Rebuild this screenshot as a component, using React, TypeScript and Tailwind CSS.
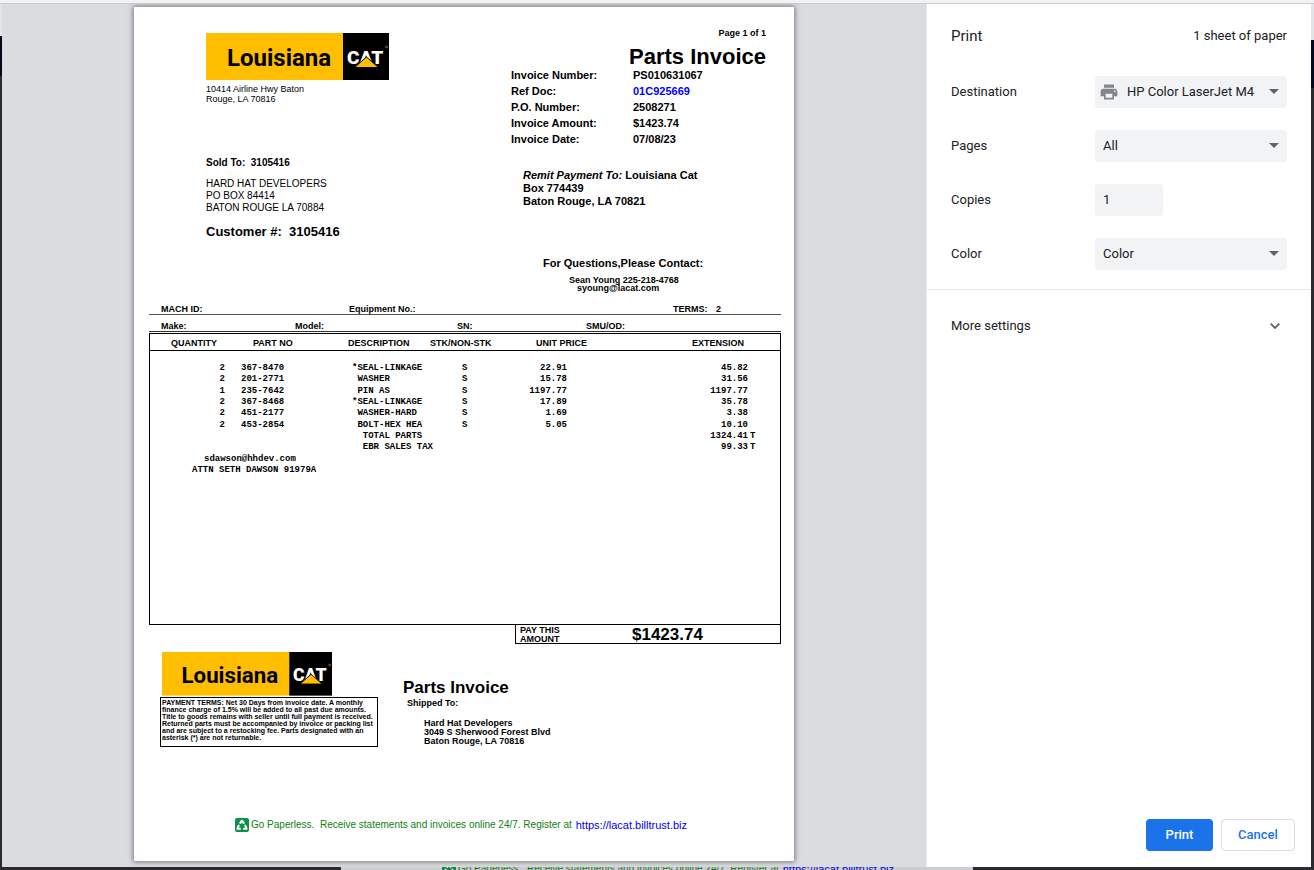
import type { ReactNode } from "react";

const INVOICE_FIELDS = [
  { label: "Invoice Number:", value: "PS010631067" },
  { label: "Ref Doc:", value: "01C925669", link: true },
  { label: "P.O. Number:", value: "2508271" },
  { label: "Invoice Amount:", value: "$1423.74" },
  { label: "Invoice Date:", value: "07/08/23" },
];

const LINES = [
  { qty: "2", part: "367-8470", desc: "*SEAL-LINKAGE", stk: "S", price: "22.91", ext: "45.82" },
  { qty: "2", part: "201-2771", desc: " WASHER", stk: "S", price: "15.78", ext: "31.56" },
  { qty: "1", part: "235-7642", desc: " PIN AS", stk: "S", price: "1197.77", ext: "1197.77" },
  { qty: "2", part: "367-8468", desc: "*SEAL-LINKAGE", stk: "S", price: "17.89", ext: "35.78" },
  { qty: "2", part: "451-2177", desc: " WASHER-HARD", stk: "S", price: "1.69", ext: "3.38" },
  { qty: "2", part: "453-2854", desc: " BOLT-HEX HEA", stk: "S", price: "5.05", ext: "10.10" },
  { desc: "  TOTAL PARTS", ext: "1324.41", tax: "T" },
  { desc: "  EBR SALES TAX", ext: "99.33", tax: "T" },
];

const ROW = "h-[11px] [&:nth-child(3n+2)]:h-3";

function Logo({ className }: { className: string }) {
  return (
    <svg viewBox="0 0 183 47" className={className} role="img" aria-label="Louisiana CAT">
      <rect width="137" height="47" fill="#ffbe00" />
      <rect x="137" width="46" height="47" fill="#000" />
      <g fontFamily="Roboto, 'Liberation Sans', sans-serif" fontWeight="700">
        <text x="21" y="33" fontSize="24">
          Louisiana
        </text>
        <text x="141" y="31" fontSize="19" fontWeight="900" fill="#fff">
          CAT
        </text>
      </g>
      <circle cx="180.500" cy="14" r="1" fill="none" stroke="#bbb" strokeWidth=".5" />
      <path d="M160.500 24 172.500 34.500H148.500z" fill="#ffbe00" stroke="#000" strokeWidth="1" />
    </svg>
  );
}

function RecycleIcon() {
  return (
    <svg viewBox="0 0 14 14" className="size-3.5 shrink-0" aria-hidden="true">
      <rect width="14" height="14" rx="2" fill="#0c9247" />
      <path
        d="M4.800 5.600 7 2.700 9.200 5.600M10 6.800 11.600 10.700H8.200M5.800 10.700H2.400L4 6.800"
        fill="none"
        stroke="#fff"
        strokeWidth="2"
        strokeLinejoin="round"
      />
    </svg>
  );
}

function PrinterIcon() {
  return (
    <svg viewBox="0 0 24 24" className="size-5" fill="#80868b" aria-hidden="true">
      <path d="M19 8H5c-1.660 0-3 1.340-3 3v6h4v4h12v-4h4v-6c0-1.660-1.340-3-3-3zm-3 11H8v-5h8v5zm3-7c-.55 0-1-.45-1-1s.45-1 1-1 1 .45 1 1-.45 1-1 1zm-1-9H6v4h12V3z" />
    </svg>
  );
}

function Paperless() {
  return (
    <div className="flex items-center">
      <RecycleIcon />
      <span className="ml-0.5 whitespace-pre text-[10px] leading-3 text-[#108010]">
        {"Go Paperless.  Receive statements and invoices online 24/7. Register at"}
      </span>
      <a href="#billtrust" className="ml-1 text-[11px] leading-3 text-[#0000ff]">
        https://lacat.billtrust.biz
      </a>
    </div>
  );
}

function LineTable() {
  return (
    <table className="w-full table-fixed border-collapse whitespace-pre text-[9px]">
      <colgroup>
        <col className="w-[75px]" />
        <col className="w-[123px]" />
        <col className="w-[82px]" />
        <col className="w-[70px]" />
        <col className="w-[87px]" />
        <col className="w-[161px]" />
        <col />
      </colgroup>
      <thead>
        <tr className="border-b border-black text-left leading-[14px]">
          <th className="pt-0.5 pr-2 text-right">QUANTITY</th>
          <th className="pt-0.5 pl-7">PART NO</th>
          <th className="pt-0.5">DESCRIPTION</th>
          <th className="pt-0.5">STK/NON-STK</th>
          <th className="pt-0.5 text-right">UNIT PRICE</th>
          <th className="pt-0.5 pr-1 text-right">EXTENSION</th>
          <th />
        </tr>
        <tr className="h-3" />
      </thead>
      <tbody className="font-['Liberation_Mono',monospace] leading-[11px] font-bold">
        {LINES.map((line) => (
          <tr key={`${line.part}${line.desc}`} className={ROW}>
            <td className="text-right">{line.qty}</td>
            <td className="pl-4">{line.part}</td>
            <td className="pl-1">{line.desc}</td>
            <td className="pl-8">{line.stk}</td>
            <td className="pr-5 text-right">{line.price}</td>
            <td className="text-right">{line.ext}</td>
            <td className="pl-0.5">{line.tax}</td>
          </tr>
        ))}
        <tr className={ROW}>
          <td colSpan={7} className="pl-[54px]">
            sdawson@hhdev.com
          </td>
        </tr>
        <tr className={ROW}>
          <td colSpan={7} className="pl-[42px]">
            ATTN SETH DAWSON 91979A
          </td>
        </tr>
      </tbody>
    </table>
  );
}

function InvoicePage() {
  return (
    <article className="w-full max-w-[660px] shrink-0 bg-white font-['Liberation_Sans',Arial,sans-serif] text-black shadow-[0_0_5px_1px_#77777c]">
      <header className="flex h-[297px] justify-between pr-7 pl-[72px]">
        <div className="pt-[26px]">
          <Logo className="w-[183px]" />
          <p className="mt-1 text-[9px] leading-[10px]">
            10414 Airline Hwy Baton
            <br />
            Rouge, LA 70816
          </p>
          <p className="mt-[53px] text-[10px] leading-3 font-bold whitespace-pre">{"Sold To:  3105416"}</p>
          <p className="mt-[9px] text-[10px] leading-[12px]">
            HARD HAT DEVELOPERS
            <br />
            PO BOX 84414
            <br />
            BATON ROUGE LA 70884
          </p>
          <p className="mt-2.5 text-[13px] leading-4 font-bold whitespace-pre">{"Customer #:  3105416"}</p>
        </div>

        <div className="w-[255px] pt-5 font-bold">
          <p className="text-right text-[9px] leading-3">Page 1 of 1</p>
          <h1 className="mt-2 text-right text-[22px] leading-5 whitespace-nowrap">Parts Invoice</h1>
          <dl className="grid grid-cols-[122px_1fr] text-[11px] leading-4">
            {INVOICE_FIELDS.map((field) => (
              <div key={field.label} className="contents">
                <dt>{field.label}</dt>
                <dd>
                  {field.link ? (
                    <a href="#ref-doc" className="text-[#0000ff]">
                      {field.value}
                    </a>
                  ) : (
                    field.value
                  )}
                </dd>
              </div>
            ))}
          </dl>
          <p className="mt-[22px] pl-3 text-[11px] leading-[13px]">
            <em>Remit Payment To:</em> Louisiana Cat
            <br />
            Box 774439
            <br />
            Baton Rouge, LA 70821
          </p>
          <h2 className="mt-[47px] pl-8 text-[11px] leading-4">For Questions,Please Contact:</h2>
          <p className="mt-[5px] pl-[58px] text-[9px] leading-[8px]">Sean Young 225-218-4768</p>
          <p className="pl-[66px] text-[9px] leading-[8px]">syoung@lacat.com</p>
        </div>
      </header>

      <section className="mr-[13px] ml-[15px] text-[9px] font-bold">
        <div className="grid grid-cols-[188px_324px_43px_1fr] border-b border-[#555] pl-3 leading-[10px]">
          <span>MACH ID:</span>
          <span>Equipment No.:</span>
          <span>TERMS:</span>
          <span>2</span>
        </div>
        <div className="grid grid-cols-[134px_162px_129px_1fr] border-b border-[#333] pt-1.5 pl-3 leading-[10px]">
          <span>Make:</span>
          <span>Model:</span>
          <span>SN:</span>
          <span>SMU/OD:</span>
        </div>
        <div className="mt-px min-h-[292px] border border-black">
          <LineTable />
        </div>
        <div className="-mt-px ml-auto flex h-5 w-[266px] items-center border border-black pt-0.5 pl-1">
          <span className="w-[112px] leading-[9px]">
            PAY THIS
            <br />
            AMOUNT
          </span>
          <span className="text-[17px] leading-4">$1423.74</span>
        </div>
      </section>

      <section className="mt-2 flex gap-[25px] pl-[26px] font-bold">
        <div className="w-[218px]">
          <Logo className="ml-0.5 w-[170px]" />
          <p className="mt-px min-h-[50px] border border-black px-px pt-px text-[7px] leading-[7px] whitespace-nowrap">
            PAYMENT TERMS: Net 30 Days from invoice date. A monthly
            <br />
            finance charge of 1.5% will be added to all past due amounts.
            <br />
            Title to goods remains with seller until full payment is received.
            <br />
            Returned parts must be accompanied by invoice or packing list
            <br />
            and are subject to a restocking fee. Parts designated with an
            <br />
            asterisk (*) are not returnable.
          </p>
        </div>
        <div className="pt-[26px]">
          <h2 className="text-[17px] leading-5">Parts Invoice</h2>
          <p className="pl-1 text-[9px] leading-[10px]">Shipped To:</p>
          <p className="mt-[11px] pl-[21px] text-[9px] leading-[9px]">
            Hard Hat Developers
            <br />
            3049 S Sherwood Forest Blvd
            <br />
            Baton Rouge, LA 70816
          </p>
        </div>
      </section>

      <footer className="pt-[71px] pb-[29px] pl-[101px]">
        <Paperless />
      </footer>
    </article>
  );
}

function SettingRow({ id, label, children }: { id: string; label: string; children: ReactNode }) {
  return (
    <div className="flex items-center justify-between">
      <label htmlFor={id}>{label}</label>
      <div className="relative w-48">{children}</div>
    </div>
  );
}

function Dropdown({ id, value, icon }: { id: string; value: string; icon?: ReactNode }) {
  return (
    <>
      {icon && <span className="absolute top-1.5 left-1">{icon}</span>}
      <select
        id={id}
        className={`h-8 w-full appearance-none rounded bg-[#f1f3f4] pr-8 ${icon ? "pl-8" : "pl-2"}`}
      >
        <option>{value}</option>
      </select>
      <svg viewBox="0 0 10 5" className="pointer-events-none absolute top-[13px] right-2 w-2.5" aria-hidden="true">
        <path d="M0 0h10L5 5z" fill="#5f6368" />
      </svg>
    </>
  );
}

function PrintSettings() {
  return (
    <aside className="flex w-[385px] shrink-0 flex-col border-l border-[#e8eaed] bg-white font-[Roboto,sans-serif] text-[13px] leading-5 text-[#202124]">
      <div className="flex items-center justify-between px-6 pt-[22px]">
        <h1 className="text-[15px]">Print</h1>
        <span>1 sheet of paper</span>
      </div>
      <form className="flex flex-col gap-[22px] border-b border-[#e8eaed] px-6 pt-[30px] pb-[19px]">
        <SettingRow id="destination" label="Destination">
          <Dropdown id="destination" value="HP Color LaserJet M4" icon={<PrinterIcon />} />
        </SettingRow>
        <SettingRow id="pages" label="Pages">
          <Dropdown id="pages" value="All" />
        </SettingRow>
        <SettingRow id="copies" label="Copies">
          <input id="copies" type="text" defaultValue="1" className="block h-8 w-[68px] rounded bg-[#f1f3f4] px-2 pb-0.5" />
        </SettingRow>
        <SettingRow id="color" label="Color">
          <Dropdown id="color" value="Color" />
        </SettingRow>
      </form>
      <button type="button" className="flex items-center justify-between px-6 py-[26px] text-left">
        More settings
        <svg viewBox="0 0 10 6" className="mr-[7px] w-2.5" fill="none" stroke="#5f6368" strokeWidth="1.800" aria-hidden="true">
          <path d="M.7.7 5 5 9.300.7" />
        </svg>
      </button>
      <div className="mt-auto flex justify-end gap-2 p-4 font-medium">
        <button type="button" className="h-8 w-[67px] rounded bg-[#1a73e8] text-white">
          Print
        </button>
        <button type="button" className="h-8 w-[74px] rounded border border-[#dadce0] text-[#1a73e8]">
          Cancel
        </button>
      </div>
    </aside>
  );
}

export default function App() {
  return (
    <div className="flex h-screen flex-col overflow-hidden bg-[#2b2b2d]">
      <div className="h-1 shrink-0 border-b border-[#c8c9cb] bg-[#f1f2f4]" />
      <div className="flex min-h-0 flex-1">
        <div className="w-0.5 shrink-0">
          <div className="h-8 bg-[#e4e5e7]" />
          <div className="h-10 bg-[#02091a]" />
        </div>
        <main className="flex min-w-0 flex-1 items-start justify-center overflow-hidden bg-[#dadce0] pt-[3px]">
          <InvoicePage />
        </main>
        <PrintSettings />
        <div className="w-[3px] shrink-0">
          <div className="h-9 bg-[#e4e5e7]" />
          <div className="h-12 bg-[#02091a]" />
        </div>
      </div>
      {/* page behind the dialog */}
      <div className="flex h-[3px] shrink-0 justify-center overflow-hidden">
        <div className="flex w-[632px] items-center bg-[#dfe0e2] pl-[101px] font-['Liberation_Sans',Arial,sans-serif] opacity-90">
          <Paperless />
        </div>
      </div>
    </div>
  );
}
